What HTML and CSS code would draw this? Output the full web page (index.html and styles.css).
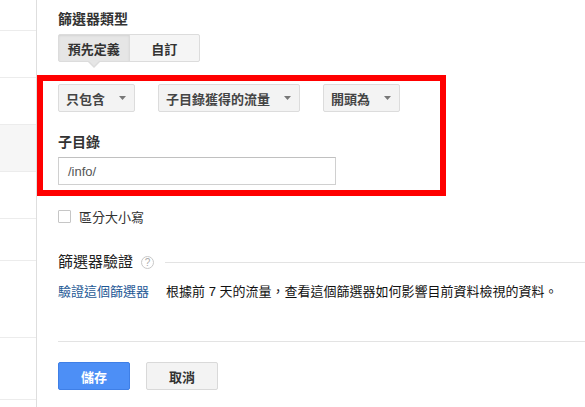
FILE: index.html
```html
<!DOCTYPE html>
<html lang="zh-Hant">
<head>
<meta charset="utf-8">
<title>篩選器</title>
<link rel="stylesheet" href="styles.css">
</head>
<body>
<div class="page">
  <aside class="sidebar">
    <div class="row r1"></div>
    <div class="row r2"></div>
    <div class="row r3"></div>
    <div class="row r4 active"></div>
    <div class="row r5"></div>
    <div class="row r6"></div>
    <div class="row r7"></div>
    <div class="row r8"></div>
  </aside>
  <main class="main">
    <h2 class="label title">篩選器類型</h2>
    <div class="tabs">
      <span class="tab active">預先定義</span>
      <span class="tab">自訂</span>
    </div>
    <div class="highlight">
      <div class="selects">
        <span class="select">只包含<svg class="caret" width="7" height="4" viewBox="0 0 7 4"><polygon points="0,0 7,0 3.5,4" fill="#777"/></svg></span>
        <span class="select">子目錄獲得的流量<svg class="caret" width="7" height="4" viewBox="0 0 7 4"><polygon points="0,0 7,0 3.5,4" fill="#777"/></svg></span>
        <span class="select">開頭為<svg class="caret" width="7" height="4" viewBox="0 0 7 4"><polygon points="0,0 7,0 3.5,4" fill="#777"/></svg></span>
      </div>
      <h3 class="label sub">子目錄</h3>
      <div class="input">/info/</div>
    </div>
    <label class="check"><span class="box"></span>區分大小寫</label>
    <div class="verify-head">
      <span class="vh-text">篩選器驗證</span>
      <span class="help">?</span>
      <span class="rule"></span>
    </div>
    <p class="verify"><a class="link">驗證這個篩選器</a><span class="desc">根據前 7 天的流量，查看這個篩選器如何影響目前資料檢視的資料。</span></p>
    <div class="divider"></div>
    <div class="actions">
      <span class="btn primary">儲存</span>
      <span class="btn">取消</span>
    </div>
  </main>
</div>
</body>
</html>
```
FILE: styles.css
```css
html, body {
  margin: 0;
  padding: 0;
  background: #fff;
}
body {
  font-family: "Liberation Sans", "Noto Sans CJK TC", sans-serif;
  font-size: 13px;
  color: #222;
  overflow: hidden;
}
.page {
  display: flex;
  width: 585px;
  height: 407px;
}
.sidebar {
  box-sizing: border-box;
  width: 37px;
  flex: none;
  border-right: 1px solid #dedede;
  display: flex;
  flex-direction: column;
}
.row {
  flex: none;
  border-bottom: 1px solid #ececec;
}
.r1 { height: 30px; }
.r2 { height: 46px; }
.r3 { height: 46px; }
.r4 { height: 46px; }
.r5 { height: 46px; }
.r6 { height: 41px; }
.r7 { height: 76px; }
.r8 { height: 61px; }
.row.active { background: #f6f6f6; }

.main {
  flex: 1;
  padding: 10px 0 0 21px;
  min-width: 0;
}
.label {
  margin: 0;
  font-size: 14px;
  line-height: 18px;
  font-weight: bold;
  color: #333;
}
.tabs {
  margin-top: 6px;
  display: flex;
  width: 142px;
  height: 28px;
  box-sizing: border-box;
  border: 1px solid #dcdcdc;
  border-radius: 2px;
  background: #f5f5f5;
  position: relative;
}
.tab {
  width: 71px;
  display: flex;
  align-items: center;
  justify-content: center;
  font-weight: bold;
  color: #333;
  position: relative;
}
.tab.active {
  background: #e6e6e6;
  box-shadow: inset 0 1px 2px rgba(0,0,0,0.08);
  border-right: 1px solid #dcdcdc;
}
.tab.active::after {
  content: "";
  position: absolute;
  left: 50%;
  bottom: -7px;
  margin-left: -6px;
  border-left: 6px solid transparent;
  border-right: 6px solid transparent;
  border-top: 6px solid #dcdcdc;
}
.tab.active::before {
  content: "";
  position: absolute;
  left: 50%;
  bottom: -5px;
  margin-left: -5px;
  border-left: 5px solid transparent;
  border-right: 5px solid transparent;
  border-top: 5px solid #e6e6e6;
  z-index: 1;
}
.highlight {
  margin-top: 13px;
  margin-left: -21px;
  width: 409px;
  box-sizing: border-box;
  border: 6px solid #ff0000;
  padding: 3px 0 5px 15px;
}
.selects {
  display: flex;
  gap: 23px;
}
.select {
  height: 28px;
  box-sizing: border-box;
  display: flex;
  align-items: center;
  gap: 14px;
  padding: 0 8px 0 7px;
  border: 1px solid #dcdcdc;
  border-radius: 2px;
  background: #f3f3f3;
  font-weight: bold;
  color: #444;
}
.caret { display: block; }
.sub { margin-top: 21px; }
.input {
  margin-top: 6px;
  width: 278px;
  height: 28px;
  box-sizing: border-box;
  border: 1px solid #d0d0d0;
  border-top-color: #c0c0c0;
  padding-left: 9px;
  display: flex;
  align-items: center;
  font-size: 13px;
  color: #555;
}
.check {
  margin-top: 11px;
  display: flex;
  align-items: center;
  height: 18px;
  color: #333;
}
.box {
  width: 13px;
  height: 13px;
  box-sizing: border-box;
  border: 1px solid #c6c6c6;
  border-radius: 1px;
  margin-right: 8px;
  background: #fff;
}
.verify-head {
  margin-top: 27px;
  display: flex;
  align-items: center;
  height: 20px;
}
.vh-text {
  font-size: 15px;
  line-height: 20px;
  color: #222;
}
.help {
  margin-left: 8px;
  width: 13px;
  height: 13px;
  box-sizing: border-box;
  border: 1px solid #c8c8c8;
  border-radius: 50%;
  color: #aaa;
  font-size: 10px;
  line-height: 11px;
  text-align: center;
  font-family: "Liberation Sans", sans-serif;
}
.rule {
  flex: 1;
  margin-left: 11px;
  height: 1px;
  background: #e3e3e3;
}
.verify {
  margin: 11px 0 0;
  line-height: 18px;
  display: flex;
}
.link {
  color: #1d5895;
  margin-right: 17px;
}
.desc { color: #111; }
.divider {
  margin-top: 40px;
  height: 1px;
  background: #e3e3e3;
}
.actions {
  margin-top: 20px;
  display: flex;
  gap: 16px;
}
.btn {
  width: 72px;
  height: 28px;
  box-sizing: border-box;
  display: flex;
  align-items: center;
  justify-content: center;
  border: 1px solid #d9d9d9;
  border-radius: 2px;
  background: #f3f3f3;
  font-weight: bold;
  color: #333;
}
.btn.primary {
  background: #4d8ff6;
  border-color: #3f7fe6;
  color: #fff;
}
```
